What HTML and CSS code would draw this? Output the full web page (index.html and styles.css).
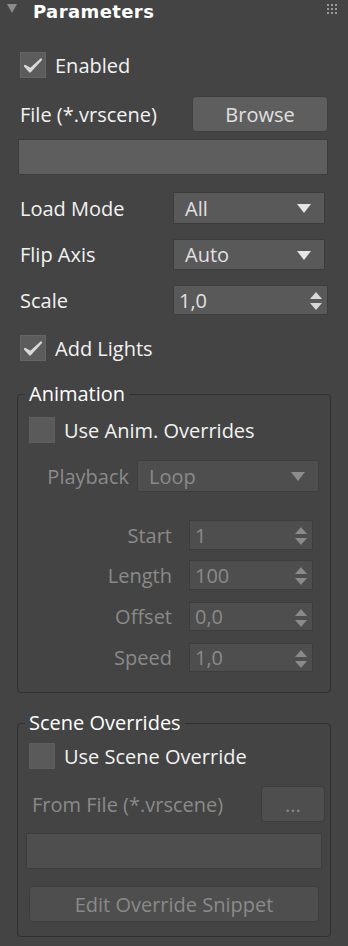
FILE: index.html
```html
<!DOCTYPE html>
<html>
  <head>
    <title>Parameters</title>
    <link rel="stylesheet" href="styles.css">
  </head>
  <body>
    <div class="rollout">
      <div class="head">
        <span class="caret"></span>
        <span class="title">Parameters</span>
        <svg class="grip" width="10" height="10" viewBox="0 0 10 10">
          <g fill="#9a9a9a">
            <rect x="0" y="0" width="2" height="2"/><rect x="4" y="0" width="2" height="2"/><rect x="8" y="0" width="2" height="2"/>
            <rect x="0" y="4" width="2" height="2"/><rect x="4" y="4" width="2" height="2"/><rect x="8" y="4" width="2" height="2"/>
            <rect x="0" y="8" width="2" height="2"/><rect x="4" y="8" width="2" height="2"/><rect x="8" y="8" width="2" height="2"/>
          </g>
        </svg>
      </div>

      <div class="body">
        <label class="check enabled-row">
          <span class="box"><svg width="26" height="26" viewBox="0 0 26 26"><path d="M5 14 L10 19.5 L21 7.5 L10.5 17 Z" fill="#d8d8d8" stroke="#d8d8d8" stroke-width="2.2" stroke-linejoin="round"/></svg></span>
          Enabled
        </label>

        <div class="row file-row">
          <span>File (*.vrscene)</span>
          <button class="btn browse">Browse</button>
        </div>
        <div class="field path"></div>

        <div class="row combo-row load">
          <span class="lbl">Load Mode</span>
          <div class="combo">All<i class="arrow"></i></div>
        </div>
        <div class="row combo-row flip">
          <span class="lbl">Flip Axis</span>
          <div class="combo">Auto<i class="arrow"></i></div>
        </div>
        <div class="row scale-row">
          <span class="lbl">Scale</span>
          <div class="spin">1,0<i class="ud"></i></div>
        </div>

        <label class="check lights-row">
          <span class="box"><svg width="26" height="26" viewBox="0 0 26 26"><path d="M5 14 L10 19.5 L21 7.5 L10.5 17 Z" fill="#d8d8d8" stroke="#d8d8d8" stroke-width="2.2" stroke-linejoin="round"/></svg></span>
          Add Lights
        </label>

        <fieldset class="group anim">
          <legend>Animation</legend>
          <label class="check first"><span class="box off"></span>Use Anim. Overrides</label>
          <div class="row off playback">
            <span class="lbl">Playback</span>
            <div class="combo dim">Loop<i class="arrow"></i></div>
          </div>
          <div class="row off num start">
            <span class="lbl">Start</span>
            <div class="spin dim">1<i class="ud"></i></div>
          </div>
          <div class="row off num">
            <span class="lbl">Length</span>
            <div class="spin dim">100<i class="ud"></i></div>
          </div>
          <div class="row off num wide">
            <span class="lbl">Offset</span>
            <div class="spin dim">0,0<i class="ud"></i></div>
          </div>
          <div class="row off num wide">
            <span class="lbl">Speed</span>
            <div class="spin dim">1,0<i class="ud"></i></div>
          </div>
        </fieldset>

        <fieldset class="group scene">
          <legend>Scene Overrides</legend>
          <label class="check first"><span class="box off"></span>Use Scene Override</label>
          <div class="row off from">
            <span>From File (*.vrscene)</span>
            <button class="btn dim dots">...</button>
          </div>
          <div class="field dim snippet-path"></div>
          <button class="btn dim edit">Edit Override Snippet</button>
        </fieldset>
      </div>
    </div>
  </body>
</html>
```

FILE: styles.css
```css
body { margin: 0; background: #444444; font-family: "Open Sans", "Noto Sans", sans-serif; font-size: 20px; color: #f2f2f2; }

.rollout { width: 348px; height: 946px; overflow: hidden; }

.head { height: 24px; display: flex; align-items: flex-start; padding-left: 7px; }
.caret { width: 0; height: 0; border-left: 5px solid transparent; border-right: 5px solid transparent; border-top: 9px solid #8c8c8c; margin: 4px 16px 0 0; }
.title { font-family: "DejaVu Sans", "Liberation Sans", sans-serif; font-weight: bold; font-size: 18px; letter-spacing: 0.4px; line-height: normal; margin-top: 1px; color: #ffffff; }
.grip { margin: 4px 11px 0 auto; }

.body { padding: 0 20px; }

.row { display: flex; align-items: center; }

.check { display: flex; align-items: center; height: 26px; }
.box { width: 26px; height: 26px; box-sizing: border-box; background: #5c5c5c; border: 1px solid #646464; margin-right: 9px; flex: none; }
.box svg { display: block; margin: -1px; }
.box.off { background: #5a5a5a; border-color: #5e5e5e; }

.enabled-row { margin-top: 28px; }

.btn { font: inherit; border: 1px solid #3e3e3e; border-radius: 4px; background: #5e5e5e; color: #e0e0e0; padding: 0; }

.file-row { margin-top: 18px; height: 36px; justify-content: space-between; }
.browse { width: 136px; height: 36px; }

.field { height: 36px; box-sizing: border-box; background: #5e5e5e; border: 1px solid #3c3c3c; }
.path { margin-top: 7px; margin-left: -2px; }

.combo-row .lbl, .scale-row .lbl { width: 153px; }
.combo, .spin { position: relative; box-sizing: border-box; background: #595959; border: 1px solid #3c3c3c; color: #e0e0e0; display: flex; align-items: center; }
.combo { width: 152px; height: 32px; padding-left: 11px; }
.load { margin-top: 17px; height: 32px; }
.flip { margin-top: 15px; height: 31px; }
.flip .combo { height: 31px; }

.arrow { position: absolute; right: 13px; top: 50%; margin-top: -4px; width: 0; height: 0; border-left: 7px solid transparent; border-right: 7px solid transparent; border-top: 9px solid #e6e6e6; }

.spin { width: 155px; height: 30px; padding-left: 5px; }
.scale-row { margin-top: 15px; height: 30px; }
.ud { position: absolute; right: 5px; top: 6px; width: 12px; height: 18px; }
.ud::before, .ud::after { content: ""; position: absolute; left: 0; width: 0; height: 0; border-left: 6px solid transparent; border-right: 6px solid transparent; }
.ud::before { top: 0; border-bottom: 7px solid #d8d8d8; }
.ud::after { bottom: 0; border-top: 7px solid #d8d8d8; }

.lights-row { margin-top: 20px; }

.group { margin: 0 -3px; border: 1px solid #303030; border-radius: 4px; padding: 0 11px; min-width: 0; }
.group legend { padding: 0 4px; margin-left: -4px; line-height: 22px; color: #ffffff; }
.anim { margin-top: 22px; padding-bottom: 20px; }
.scene { margin-top: 19px; padding-bottom: 14px; }

.anim .first { margin-top: 12px; }
.scene .first { margin-top: 9px; }

.off { color: #8a8a8a; }
.dim { background: #4e4e4e; border-color: #3d3d3d; color: #8a8a8a; }
.dim .arrow { border-top-color: #8c8c8c; }
.dim .ud::before { border-bottom-color: #8a8a8a; }
.dim .ud::after { border-top-color: #8a8a8a; }

.playback { margin-top: 17px; height: 32px; }
.playback .lbl { width: 100px; text-align: right; margin-right: 8px; }
.playback .combo { flex: 1; width: auto; }

.num { margin-top: 10px; height: 30px; }
.num.start { margin-top: 28px; }
.num.wide { margin-top: 12px; height: 29px; }
.num .lbl { width: 143px; text-align: right; margin-right: 17px; }
.num .spin { width: 124px; height: 100%; }

.from { margin-top: 17px; height: 36px; justify-content: space-between; padding-left: 3px; margin-right: -6px; }
.dots { width: 64px; height: 36px; }
.snippet-path { margin: 11px -3px 0; }
.edit { display: block; width: 100%; height: 36px; margin-top: 17px; }
```
